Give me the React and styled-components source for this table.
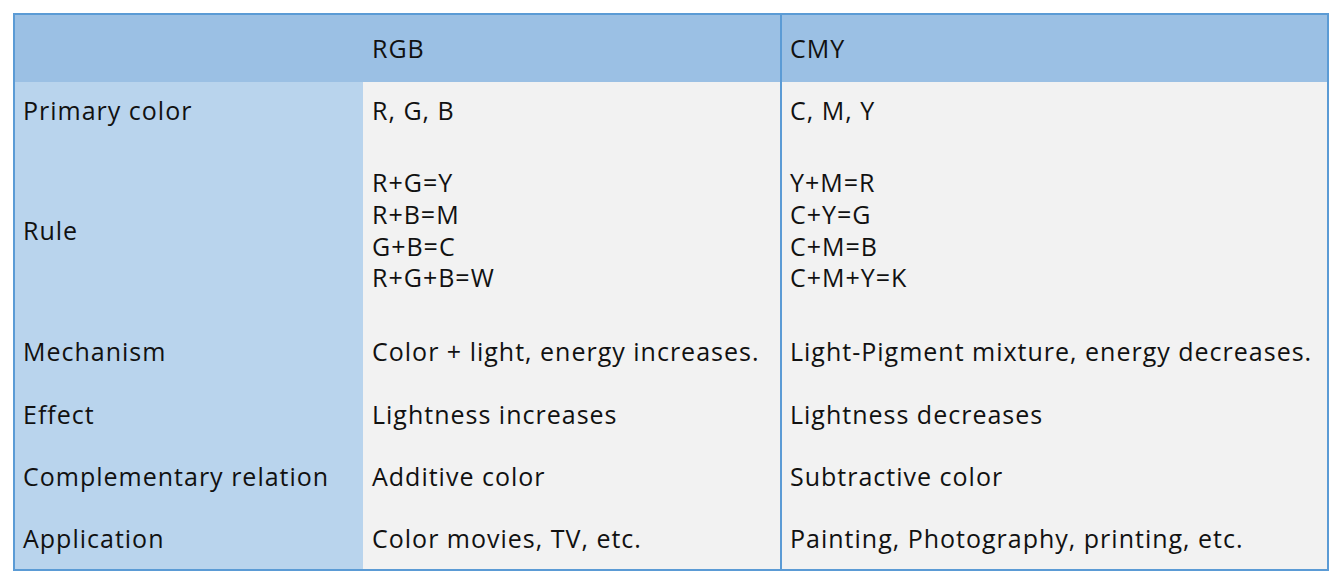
import React from 'react';
import styled, { createGlobalStyle } from 'styled-components';

const GlobalStyle = createGlobalStyle`
  body {
    margin: 0;
    background: #ffffff;
    font-family: "Open Sans", "Liberation Sans", sans-serif;
  }
`;

const rows = [
  { label: 'Primary color', rgb: ['R, G, B'], cmy: ['C, M, Y'], height: 58 },
  {
    label: 'Rule',
    rgb: ['R+G=Y', 'R+B=M', 'G+B=C', 'R+G+B=W'],
    cmy: ['Y+M=R', 'C+Y=G', 'C+M=B', 'C+M+Y=K'],
    height: 181,
  },
  {
    label: 'Mechanism',
    rgb: ['Color + light, energy increases.'],
    cmy: ['Light-Pigment mixture, energy decreases.'],
    height: 62,
  },
  { label: 'Effect', rgb: ['Lightness increases'], cmy: ['Lightness decreases'], height: 63 },
  {
    label: 'Complementary relation',
    rgb: ['Additive color'],
    cmy: ['Subtractive color'],
    height: 62,
  },
  {
    label: 'Application',
    rgb: ['Color movies, TV, etc.'],
    cmy: ['Painting, Photography, printing, etc.'],
    height: 61,
  },
];

const Page = styled.div`
  padding: 13px 0 0 13px;
`;

const Table = styled.div`
  width: 1316px;
  box-sizing: border-box;
  border: 2px solid #5b9bd5;
  display: grid;
  grid-template-columns: 348px 417px 1fr;
  grid-template-rows: 67px ${rows.map((r) => `${r.height}px`).join(' ')};
`;

const Cell = styled.div`
  background: ${(p) => (p.$head ? '#9bc0e4' : p.$side ? '#b9d4ed' : '#f2f2f2')};
  border-left: ${(p) => (p.$divider ? '2px solid #5b9bd5' : 'none')};
  display: flex;
  flex-direction: column;
  justify-content: center;
  padding-left: ${(p) => (p.$side ? '8px' : p.$divider ? '8px' : '9px')};
  font-size: 25px;
  line-height: 31.7px;
  letter-spacing: 1px;
  color: #111;
  white-space: nowrap;
  overflow: hidden;
`;

const Line = styled.span`
  display: block;
`;

export default function App() {
  return (
    <Page>
      <GlobalStyle />
      <Table>
        <Cell $head $side />
        <Cell $head>RGB</Cell>
        <Cell $head $divider>CMY</Cell>
        {rows.map((r) => (
          <React.Fragment key={r.label}>
            <Cell $side>{r.label}</Cell>
            <Cell>
              {r.rgb.map((t) => (
                <Line key={t}>{t}</Line>
              ))}
            </Cell>
            <Cell $divider>
              {r.cmy.map((t) => (
                <Line key={t}>{t}</Line>
              ))}
            </Cell>
          </React.Fragment>
        ))}
      </Table>
    </Page>
  );
}
